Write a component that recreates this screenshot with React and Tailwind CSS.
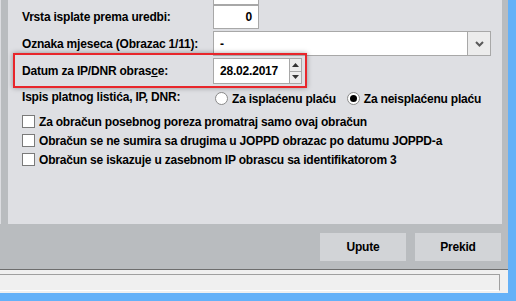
import React from 'react';

const font = "font-['Liberation_Sans',Arial,sans-serif]";

const Radio = ({ checked, label }) => (
    <label className="flex items-center gap-[4px]">
        <span className="w-[13px] h-[13px] rounded-full border border-[#8a8a8a] bg-white flex items-center justify-center">
            {checked && <span className="w-[7px] h-[7px] rounded-full bg-black" />}
        </span>
        <span>{label}</span>
    </label>
);

const Check = ({ label }) => (
    <div className="flex items-center h-[13px] pl-[14px] gap-[4px]">
        <span className="w-[13px] h-[13px] border border-[#7a7a7a] bg-white" />
        <span>{label}</span>
    </div>
);

const App = () => {
    return (
        <div className={`${font} w-[516px] h-[301px] bg-[#64b1f8] flex overflow-hidden text-[12px] tracking-[-0.2px] font-bold text-black whitespace-nowrap`}>
            <div className="w-[508px] h-[293px] flex flex-col bg-[#b9bcbf]">
                {/* Main panel */}
                <div className="flex h-[224px]">
                    <div className="w-[1px] bg-[#dcdde1]" />
                    <div className="w-[7px] bg-[#b9bcbf]" />
                    <div className="w-[494px] bg-[#dedfe3] flex flex-col">
                        {/* cut off field at top */}
                        <div className="ml-[205px] w-[46px] h-[5px] bg-white border-x border-b border-[#a8a8a8]" />

                        <div className="flex items-center h-[24px]">
                            <div className="w-[205px] pl-[14px]">Vrsta isplate prema uredbi:</div>
                            <div className="w-[46px] h-[24px] bg-white border border-[#a8a8a8] flex items-center justify-end pr-[6px]">0</div>
                        </div>

                        <div className="flex items-center h-[25px] mt-[2px]">
                            <div className="w-[205px] pl-[14px]">Oznaka mjeseca (Obrazac 1/11):</div>
                            <div className="w-[278px] h-[25px] bg-white border border-[#a8a8a8] flex">
                                <div className="flex-1 flex items-center pl-[6px]">-</div>
                                <div className="w-[23px] bg-[#ececec] border-l border-[#a8a8a8] flex items-center justify-center">
                                    <svg width="9" height="6" viewBox="0 0 9 6">
                                        <path d="M1 1 L4.5 4.5 L8 1" fill="none" stroke="#5a5a5a" strokeWidth="2" />
                                    </svg>
                                </div>
                            </div>
                        </div>

                        {/* Date row with red annotation frame */}
                        <div className="relative flex items-center h-[26px] mt-[2px]">
                            <div className="w-[205px] pl-[14px]">
                                Datum za IP/DNR obras<span className="underline">c</span>e:
                            </div>
                            <div className="w-[89px] h-[26px] bg-white border border-[#a8a8a8] flex">
                                <div className="flex-1 flex items-center pl-[6px]">28.02.2017</div>
                                <div className="w-[12px] flex flex-col border-l border-[#a8a8a8] bg-[#ececec]">
                                    <div className="flex-1 flex items-center justify-center border-b border-[#a8a8a8]">
                                        <svg width="7" height="4" viewBox="0 0 7 4"><path d="M0 4 L3.5 0 L7 4 Z" fill="#333" /></svg>
                                    </div>
                                    <div className="flex-1 flex items-center justify-center">
                                        <svg width="7" height="4" viewBox="0 0 7 4"><path d="M0 0 L3.5 4 L7 0 Z" fill="#333" /></svg>
                                    </div>
                                </div>
                            </div>
                            <div className="absolute left-[5px] top-[-5px] w-[294px] h-[35px] border-2 border-[#e8262b] shadow-[0_0_5px_rgba(0,0,0,0.35)]" />
                        </div>

                        <div className="flex items-center h-[15px] mt-[7px]">
                            <div className="w-[207px] pl-[14px] self-start -mt-[3px]">Ispis platnog listića, IP, DNR:</div>
                            <div className="flex items-center gap-[11px]">
                                <Radio label="Za isplaćenu plaću" />
                                <Radio checked label="Za neisplaćenu plaću" />
                            </div>
                        </div>

                        <div className="flex flex-col gap-[6px] mt-[9px]">
                            <Check label="Za obračun posebnog poreza promatraj samo ovaj obračun" />
                            <Check label="Obračun se ne sumira sa drugima u JOPPD obrazac po datumu JOPPD-a" />
                            <Check label="Obračun se iskazuje u zasebnom IP obrascu sa identifikatorom 3" />
                        </div>
                    </div>
                    <div className="w-[6px] bg-[#b9bcbf]" />
                </div>

                {/* Buttons */}
                <div className="h-[45px] flex items-center justify-end gap-[9px] pr-[7px]">
                    <button className="w-[86px] h-[28px] bg-[#d2d4d7]">Upute</button>
                    <button className="w-[86px] h-[28px] bg-[#d2d4d7]">Prekid</button>
                </div>

                {/* Status bar */}
                <div className="h-[24px] border-t border-[#6d6d6d] bg-[#f0f0f0] pt-[4px] pr-[8px]">
                    <div className="h-[17px] border-t border-r border-[#a0a0a0] border-b-white border-b" />
                </div>
            </div>
        </div>
    );
};

export default App;
